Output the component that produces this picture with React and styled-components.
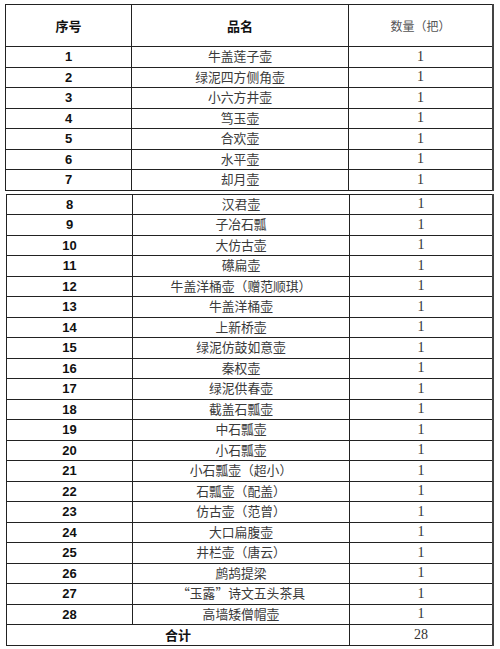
import styled, { createGlobalStyle } from "styled-components";

const GlobalStyle = createGlobalStyle`
  html, body {
    margin: 0;
    padding: 0;
    background: #fff;
  }
  body {
    font-family: "Liberation Sans", "Noto Sans CJK SC", sans-serif;
  }
`;

const Sheet = styled.div`
  width: 500px;
  height: 649px;
  padding: 4px 6px 0 5px;
  box-sizing: border-box;
  display: flex;
  flex-direction: column;
  gap: 3px;
`;

const Table = styled.table`
  border-collapse: collapse;
  table-layout: fixed;
  border-left: 1.5px solid ${(p) => (p.$lower ? "#555" : "#888")};
  border-right: 2px solid #444;
  border-top: ${(p) => (p.$lower ? "none" : "1.5px solid #666")};
  border-bottom: ${(p) => (p.$lower ? "1.5px solid #555" : "1px solid #222")};
  margin-left: ${(p) => (p.$lower ? "1px" : "0")};
  width: ${(p) => (p.$lower ? "488px" : "489px")};
`;

const Row = styled.tr`
  height: ${(p) => (p.$head ? "42px" : "20.5px")};
`;

const Cell = styled.td`
  border: 1px solid #222;
  padding: 0;
  text-align: center;
  vertical-align: middle;
  line-height: 1;
  white-space: nowrap;
  overflow: hidden;
`;

const HeadCell = styled(Cell)`
  font-family: "Noto Sans CJK SC", sans-serif;
  font-size: ${(p) => (p.$light ? "12px" : "13px")};
  font-weight: ${(p) => (p.$light ? 400 : 700)};
  color: ${(p) => (p.$light ? "#555" : "#111")};
`;

const IndexCell = styled(Cell)`
  font-family: "Liberation Sans", Arial, sans-serif;
  font-weight: 700;
  font-size: 13px;
  color: #111;
`;

const NameCell = styled(Cell)`
  font-family: "Noto Sans CJK SC", sans-serif;
  font-size: 12.8px;
  font-weight: 400;
  color: #3a3a3a;
`;

const CountCell = styled(Cell)`
  font-family: "Liberation Serif", "Times New Roman", serif;
  font-size: 14px;
  color: #333;
`;

const TotalLabel = styled(Cell)`
  font-family: "Noto Sans CJK SC", sans-serif;
  font-weight: 700;
  font-size: 13px;
  color: #111;
`;

const items = [
  "牛盖莲子壶",
  "绿泥四方侧角壶",
  "小六方井壶",
  "笃玉壶",
  "合欢壶",
  "水平壶",
  "却月壶",
  "汉君壶",
  "子冶石瓢",
  "大仿古壶",
  "礤扁壶",
  "牛盖洋桶壶（赠范顺琪）",
  "牛盖洋桶壶",
  "上新桥壶",
  "绿泥仿鼓如意壶",
  "秦权壶",
  "绿泥供春壶",
  "截盖石瓢壶",
  "中石瓢壶",
  "小石瓢壶",
  "小石瓢壶（超小）",
  "石瓢壶（配盖）",
  "仿古壶（范曾）",
  "大口扁腹壶",
  "井栏壶（唐云）",
  "鹧鸪提梁",
  "“玉露”诗文五头茶具",
  "高墙矮僧帽壶",
];

function Cols() {
  return (
    <colgroup>
      <col style={{ width: "126px" }} />
      <col style={{ width: "217px" }} />
      <col />
    </colgroup>
  );
}

function ItemRow({ index, name }) {
  return (
    <Row>
      <IndexCell>{index}</IndexCell>
      <NameCell>{name}</NameCell>
      <CountCell>1</CountCell>
    </Row>
  );
}

export default function App() {
  const upper = items.slice(0, 7);
  const lower = items.slice(7);
  return (
    <>
      <GlobalStyle />
      <Sheet>
        <Table>
          <Cols />
          <tbody>
            <Row $head>
              <HeadCell>序号</HeadCell>
              <HeadCell>品名</HeadCell>
              <HeadCell $light>数量（把）</HeadCell>
            </Row>
            {upper.map((name, i) => (
              <ItemRow key={name} index={i + 1} name={name} />
            ))}
          </tbody>
        </Table>
        <Table $lower>
          <Cols />
          <tbody>
            {lower.map((name, i) => (
              <ItemRow key={name} index={i + 8} name={name} />
            ))}
            <Row>
              <TotalLabel colSpan={2}>合计</TotalLabel>
              <CountCell>28</CountCell>
            </Row>
          </tbody>
        </Table>
      </Sheet>
    </>
  );
}
